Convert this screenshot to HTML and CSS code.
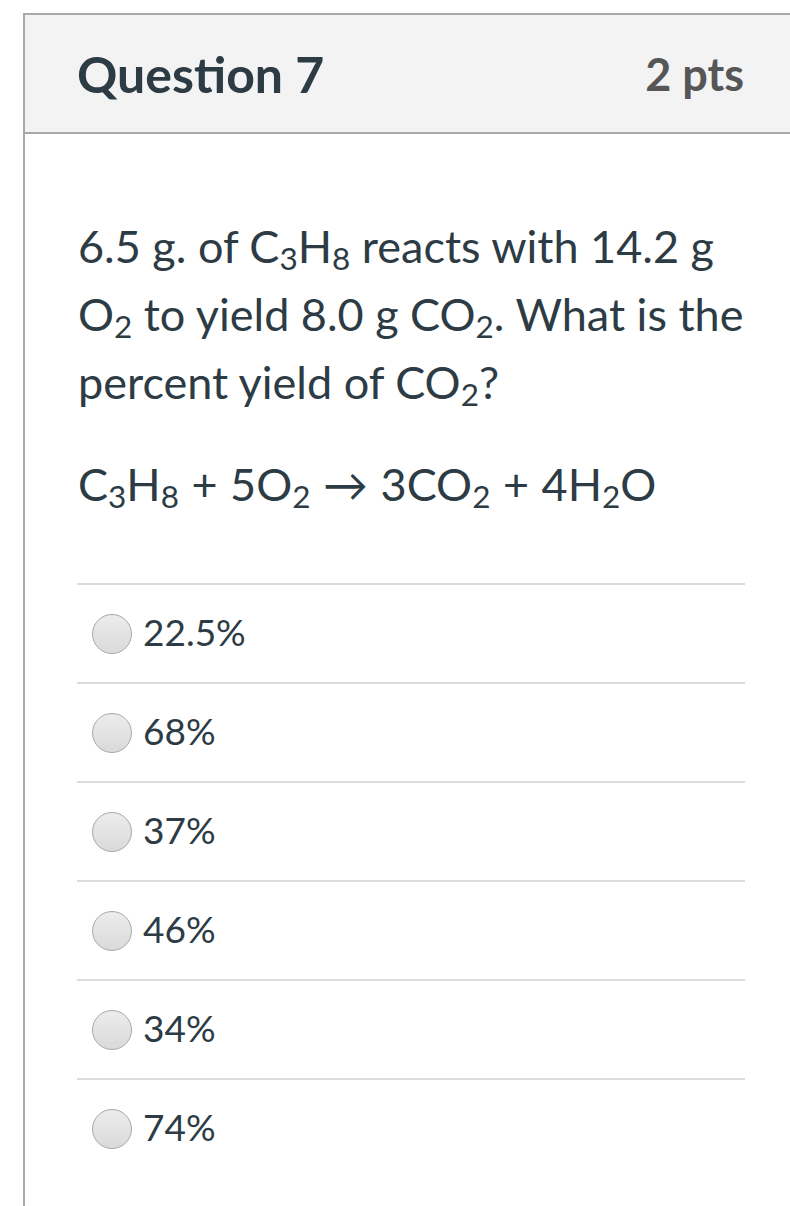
FILE: index.html
```html
<!DOCTYPE html>
<html>
<head>
<meta charset="utf-8">
<link rel="stylesheet" href="styles.css">
</head>
<body>
<div class="question">
  <div class="header">
    <h2 class="title">Question 7</h2>
    <div class="pts">2 pts</div>
  </div>
  <div class="content">
    <p class="text">6.5 g. of C<sub>3</sub>H<sub>8</sub> reacts with 14.2 g O<sub>2</sub> to yield 8.0 g CO<sub>2</sub>. What is the percent yield of CO<sub>2</sub>?</p>
    <p class="text eq">C<sub>3</sub>H<sub>8</sub> + 5O<sub>2</sub> → 3CO<sub>2</sub> + 4H<sub>2</sub>O</p>
    <div class="answers">
      <label class="answer"><span class="radio"></span><span class="label">22.5%</span></label>
      <label class="answer"><span class="radio"></span><span class="label">68%</span></label>
      <label class="answer"><span class="radio"></span><span class="label">37%</span></label>
      <label class="answer"><span class="radio"></span><span class="label">46%</span></label>
      <label class="answer"><span class="radio"></span><span class="label">34%</span></label>
      <label class="answer"><span class="radio"></span><span class="label">74%</span></label>
    </div>
  </div>
</div>
</body>
</html>
```

FILE: styles.css
```css
html, body {
  margin: 0;
  padding: 0;
  background: #ffffff;
}
body {
  font-family: Lato, "Open Sans", sans-serif;
  color: #2d3b45;
  overflow: hidden;
  height: 1206px;
}
.question {
  margin: 13px 0 0 23px;
  border-top: 2px solid #a9a9a9;
  border-left: 2px solid #a9a9a9;
  height: 1191px;
}
.header {
  display: flex;
  align-items: center;
  justify-content: space-between;
  height: 117px;
  padding: 0 46px 0 52px;
  background: #f3f3f3;
  border-bottom: 2px solid #a9a9a9;
}
.title {
  margin: 0;
  font-size: 50px;
  font-weight: 700;
  color: #2d3b45;
}
.pts {
  font-size: 45px;
  font-weight: 700;
  color: #565656;
}
.content {
  padding: 78px 30px 0 53px;
}
.text {
  margin: 0;
  font-size: 45px;
  line-height: 68px;
}
.text + .text {
  margin-top: 34px;
}
.eq {
  word-spacing: 1px;
}
sub {
  font-size: 0.7em;
  line-height: 0;
  vertical-align: -0.22em;
}
.answers {
  width: 668px;
  margin: 65px 0 0 -1px;
}
.answer {
  display: flex;
  align-items: center;
  height: 97px;
  border-top: 2px solid #dcdcdc;
  padding-left: 15px;
}
.radio {
  width: 38px;
  height: 38px;
  border-radius: 50%;
  border: 1px solid #a8a8a8;
  background: linear-gradient(#ececec, #dadada);
  margin-right: 11px;
  flex: none;
}
.label {
  font-size: 37px;
  color: #2d3b45;
  padding-bottom: 5px;
}
```
